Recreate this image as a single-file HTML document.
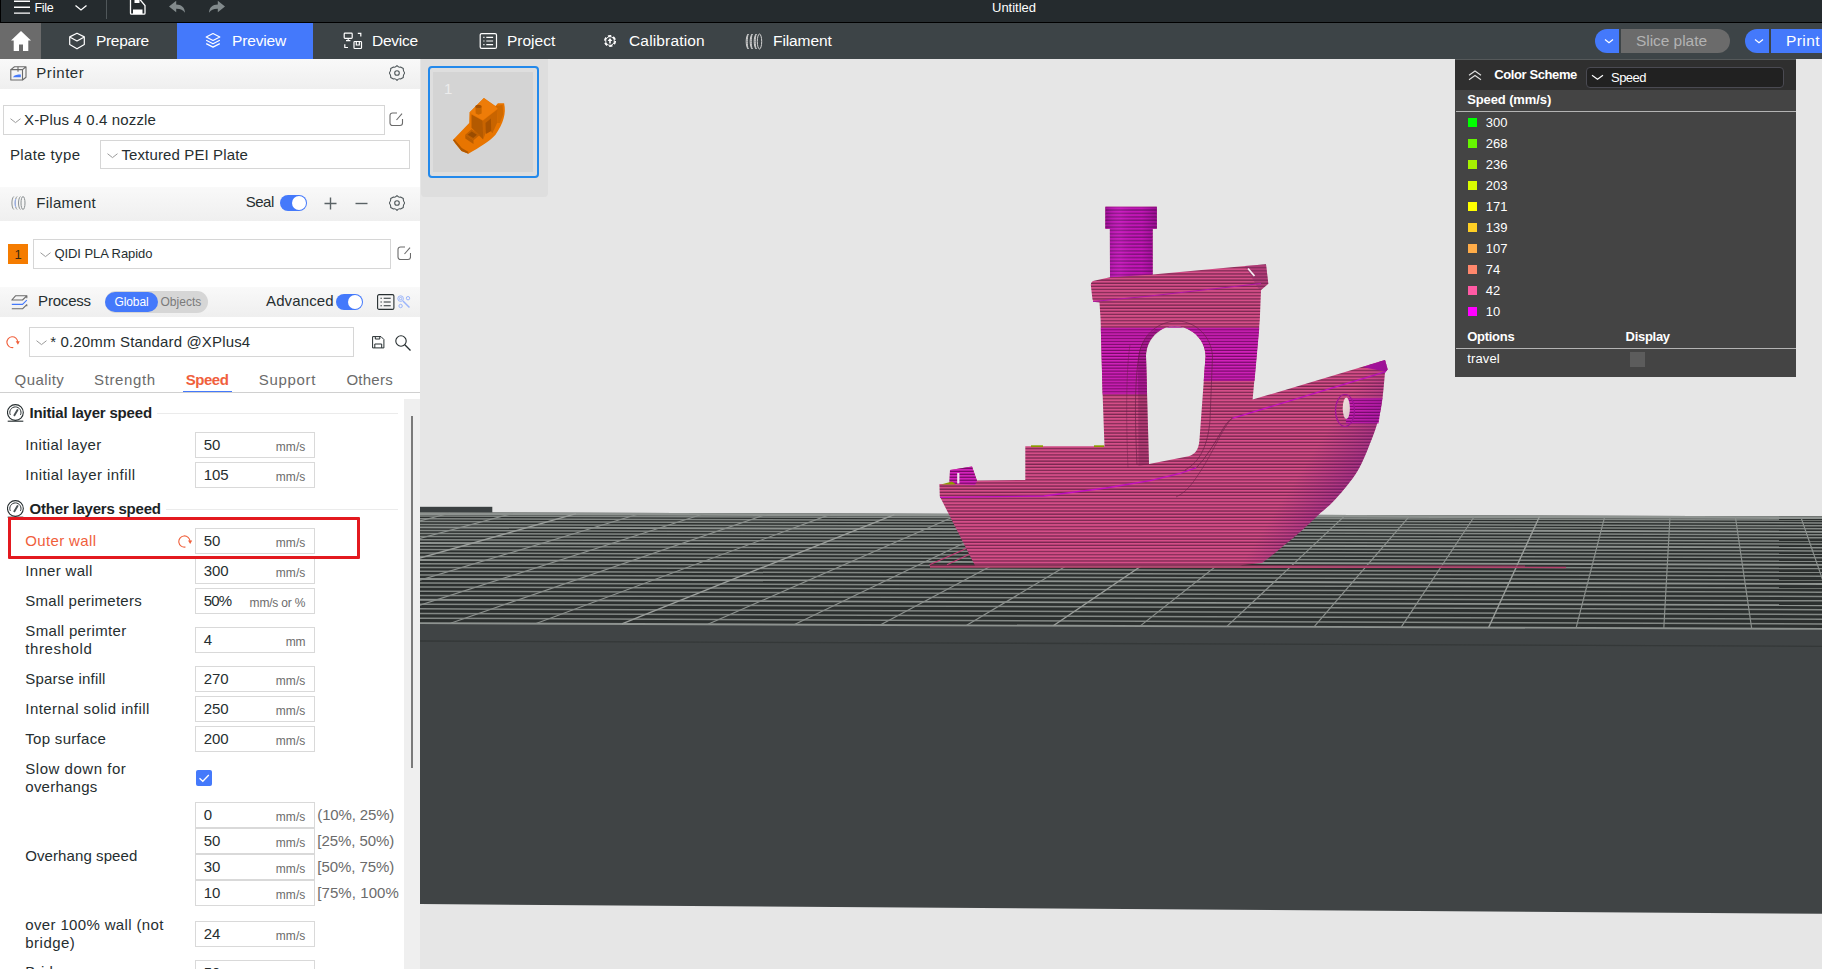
<!DOCTYPE html>
<html lang="en">
<head>
<meta charset="utf-8">
<title>Untitled</title>
<style>
*{box-sizing:border-box;margin:0;padding:0}
html,body{width:1822px;height:969px;overflow:hidden;background:#e6e6e6;font-family:"Liberation Sans",sans-serif;color:#262e30}
.abs{position:absolute}
#titlebar{position:absolute;left:0;top:0;width:1822px;height:23px;background:#252b2e;border-bottom:1px solid #000;color:#fff;overflow:hidden;z-index:5}
#navbar{position:absolute;left:0;top:23px;width:1822px;height:36px;background:#3d4447;color:#fff;z-index:5}
#left{position:absolute;left:0;top:0;width:420px;height:969px;background:#fff;overflow:hidden}
#view{position:absolute;left:0;top:0;width:1822px;height:969px;overflow:hidden}
.t{position:absolute;white-space:nowrap;line-height:1}
/* section headers */
.hdr{position:absolute;left:0;width:420px;background:linear-gradient(#f8f8f8,#efefef)}
.combo{position:absolute;border:1px solid #dbdbdb;background:#fff}
.inp{position:absolute;left:195px;width:121px;height:26px;border:1px solid #dbdbdb;background:#fff}
.inp .v{position:absolute;left:8px;top:4px;font-size:15px;line-height:1;color:#262e30}
.inp .u{position:absolute;right:9px;top:8px;font-size:11.5px;line-height:1;color:#6b6b6b}
.lbl{position:absolute;left:25px;font-size:15px;line-height:18px;color:#262e30}
</style>
</head>
<body>
<div id="titlebar">
<div class="abs" style="left:0;top:0;width:1px;height:22px;background:#000"></div>
<svg class="abs" style="left:14px;top:0" width="17" height="15" viewBox="0 0 17 15"><path d="M0 1.2h16M0 7.2h16M0 13.1h16" stroke="#fff" stroke-width="1.4" fill="none"/></svg>
<div class="t" style="left:34.500px;top:1.500px;font-size:12.500px;letter-spacing:-0.300px;color:#fff">File</div>
<svg class="abs" style="left:74px;top:4px" width="14" height="8" viewBox="0 0 14 8"><path d="M1.5 1.5L7 6l5.500-4.500" stroke="#fff" stroke-width="1.3" fill="none"/></svg>
<div class="abs" style="left:106px;top:0;width:1px;height:19px;background:#50575a"></div>
<svg class="abs" style="left:129px;top:0" width="18" height="16" viewBox="0 0 18 16"><path d="M1.500-2V13.200a1 1 0 0 0 1 1H15a1 1 0 0 0 1-1V5.500L10.500-1" stroke="#fff" stroke-width="1.300" fill="none"/><rect x="4" y="9.500" width="9.500" height="4.500" fill="#fff"/><rect x="5.500" y="-1" width="5" height="4" fill="#fff"/></svg>
<svg class="abs" style="left:169px;top:0" width="17" height="14" viewBox="0 0 17 14"><path d="M0 6.500L7.200 0.800V4.500C12.500 4.500 15.800 7.500 16 12.800C14 9.800 11.500 8.600 7.200 8.700V12.300Z" fill="#828a8c"/></svg>
<svg class="abs" style="left:208px;top:0" width="17" height="14" viewBox="0 0 17 14"><path d="M17 6.500L9.800 0.800V4.500C4.500 4.500 1.200 7.500 1 12.800C3 9.800 5.500 8.600 9.800 8.700V12.300Z" fill="#828a8c"/></svg>
<div class="t" style="left:992px;top:1px;font-size:13px;color:#fff">Untitled</div>
</div>
<div id="navbar">
<div class="abs" style="left:0;top:0;width:41px;height:36px;background:#6b6b6b"></div>
<svg class="abs" style="left:10px;top:7px" width="22" height="22" viewBox="0 0 22 22"><path d="M11 1L1 10.500h2.700V21h5.300v-6.500h4V21h5.300V10.500H21Z" fill="#fff"/></svg>
<svg class="abs" style="left:68px;top:9px" width="18" height="18" viewBox="0 0 18 18"><path d="M9 1.200L16.300 4.900V12.600L9 16.800L1.700 12.600V4.900Z M1.700 4.900L9 9L16.300 4.900" stroke="#fff" stroke-width="1.200" fill="none" stroke-linejoin="round"/></svg>
<div class="t" style="left:96px;top:10.200px;font-size:15.500px;letter-spacing:-0.32px">Prepare</div>
<div class="abs" style="left:177px;top:0;width:136px;height:36px;background:#4479fb"></div>
<svg class="abs" style="left:204px;top:9px" width="18" height="18" viewBox="0 0 18 18"><path d="M9 1.500L15.800 5L9 8.500L2.200 5Z M2.200 8.300L9 11.800L15.800 8.300 M2.200 11.600L9 15.100L15.800 11.600" stroke="#fff" stroke-width="1.200" fill="none" stroke-linejoin="round"/></svg>
<div class="t" style="left:232px;top:10.200px;font-size:15.500px;letter-spacing:-0.15px">Preview</div>
<svg class="abs" style="left:343px;top:9px" width="20" height="18" viewBox="0 0 20 18"><g stroke="#fff" stroke-width="1.200" fill="none"><rect x="1.200" y="1.200" width="8" height="5.200" rx="0.800"/><path d="M5.200 6.400V8.500M3 8.600h4.400"/><path d="M14.800 1.300h3v3.200"/><path d="M1.800 12.300v3.200h3.200"/><rect x="11" y="9.500" width="7.500" height="7" rx="0.800"/><path d="M13.300 9.800v3.200h3v-3.200"/></g></svg>
<div class="t" style="left:372px;top:10.200px;font-size:15.500px;letter-spacing:-0.26px">Device</div>
<svg class="abs" style="left:479px;top:9px" width="19" height="18" viewBox="0 0 19 18"><g stroke="#fff" stroke-width="1.200" fill="none"><rect x="1.200" y="1.600" width="16.300" height="14.800" rx="1.500"/><path d="M4.300 5.400h1.200M7.300 5.400h6.800M4.300 9h1.200M7.300 9h6.800M4.300 12.600h1.200M7.300 12.600h6.800"/></g></svg>
<div class="t" style="left:507px;top:10.200px;font-size:15.500px;letter-spacing:0.00px">Project</div>
<svg class="abs" style="left:603px;top:11px" width="14" height="14" viewBox="0 0 14 14"><circle cx="7" cy="7" r="5.200" stroke="#fff" stroke-width="1.700" stroke-dasharray="3.300 2.150" fill="none"/><circle cx="7" cy="7" r="4.300" stroke="#fff" stroke-width="0.900" fill="none"/><path d="M7 4L4.600 7h1.600v2.600h1.600V7h1.600Z" fill="#fff"/></svg>
<div class="t" style="left:629px;top:10.200px;font-size:15.500px;letter-spacing:0.16px">Calibration</div>
<svg class="abs" style="left:745px;top:10px" width="18" height="17" viewBox="0 0 18 17"><g stroke="#d2d2d2" stroke-width="1" fill="none"><path d="M3.300 1C0.500 3 0.500 14 3.300 16C1.900 13 1.900 4 3.300 1Z"/><path d="M7.300 1C4.500 3 4.500 14 7.300 16C5.900 13 5.900 4 7.300 1Z"/><path d="M11.300 1C8.500 3 8.500 14 11.300 16C9.900 13 9.900 4 11.300 1Z"/><ellipse cx="14.500" cy="8.500" rx="2.200" ry="7.500"/></g></svg>
<div class="t" style="left:773px;top:10.200px;font-size:15.500px;letter-spacing:-0.09px">Filament</div>
<div class="abs" style="left:1595px;top:6px;width:24px;height:24px;background:#4479fb;border-radius:12px 0 0 12px"></div>
<svg class="abs" style="left:1604px;top:15px" width="10" height="7" viewBox="0 0 10 7"><path d="M1 1.500L5 4.800L9 1.500" stroke="#fff" stroke-width="1.200" fill="none"/></svg>
<div class="abs" style="left:1621px;top:6px;width:109px;height:24px;background:#6b6b6b;border-radius:0 12px 12px 0"></div>
<div class="t" style="left:1636px;top:10.200px;font-size:15.500px;letter-spacing:-0.05px;color:#b3b3b3">Slice plate</div>
<div class="abs" style="left:1745px;top:6px;width:24px;height:24px;background:#4479fb;border-radius:12px 0 0 12px"></div>
<svg class="abs" style="left:1754px;top:15px" width="10" height="7" viewBox="0 0 10 7"><path d="M1 1.500L5 4.800L9 1.500" stroke="#fff" stroke-width="1.200" fill="none"/></svg>
<div class="abs" style="left:1771px;top:6px;width:60px;height:24px;background:#4479fb"></div>
<div class="t" style="left:1786px;top:10.200px;font-size:15.500px;letter-spacing:0.40px">Print</div>
</div>
<div id="view">
<svg class="abs" style="left:0;top:0" width="1822" height="969" viewBox="0 0 1822 969">
<defs><clipPath id="cpv"><rect x="420" y="59" width="1402" height="910"/></clipPath><pattern id="pk" width="10" height="3.120" patternUnits="userSpaceOnUse"><rect width="10" height="3.120" fill="#d54e88"/><rect y="1.850" width="10" height="1.270" fill="#7a2850"/></pattern><pattern id="mg" width="10" height="2.950" patternUnits="userSpaceOnUse"><rect width="10" height="2.950" fill="#d522bd"/><rect y="1.650" width="10" height="1.300" fill="#780a68"/></pattern><pattern id="mg2" width="10" height="3.400" patternUnits="userSpaceOnUse"><rect width="10" height="3.400" fill="#c416b8"/><rect y="1.900" width="10" height="1.500" fill="#84107e"/></pattern><linearGradient id="bowsh" gradientUnits="userSpaceOnUse" x1="1298" y1="475" x2="1340" y2="502"><stop offset="0" stop-color="#70107a" stop-opacity="0"/><stop offset="1" stop-color="#70107a" stop-opacity="0.480"/></linearGradient><linearGradient id="chsh" x1="0" x2="1" y1="0" y2="0"><stop offset="0" stop-color="#500050" stop-opacity="0.300"/><stop offset="0.300" stop-color="#ff60ff" stop-opacity="0.120"/><stop offset="0.700" stop-color="#500050" stop-opacity="0"/><stop offset="1" stop-color="#500050" stop-opacity="0.350"/></linearGradient></defs>
<g clip-path="url(#cpv)">
<rect x="420" y="506.800" width="72.300" height="6.500" fill="#3b4041"/>
<polygon points="420,512.16 1822,516.25 1822,628.90 420,623.10" fill="#2c302f"/>
<polygon points="420,623.10 1822,628.90 1822,913.800 420,904.100" fill="#404445"/>
<line x1="420" y1="641" x2="1822" y2="646.300" stroke="#343838" stroke-width="1.300"/>
<line x1="410" y1="513.63" x2="1830" y2="517.77" stroke="#8e9390" stroke-width="2.60"/>
<line x1="410" y1="515.88" x2="1830" y2="520.07" stroke="#838885" stroke-width="1.50"/>
<line x1="410" y1="518.68" x2="1830" y2="522.91" stroke="#838885" stroke-width="1.50"/>
<line x1="410" y1="521.53" x2="1830" y2="525.80" stroke="#838885" stroke-width="1.50"/>
<line x1="410" y1="524.42" x2="1830" y2="528.75" stroke="#838885" stroke-width="1.50"/>
<line x1="410" y1="527.37" x2="1830" y2="531.74" stroke="#8e9390" stroke-width="1.90"/>
<line x1="410" y1="530.38" x2="1830" y2="534.79" stroke="#838885" stroke-width="1.50"/>
<line x1="410" y1="533.43" x2="1830" y2="537.90" stroke="#838885" stroke-width="1.50"/>
<line x1="410" y1="536.55" x2="1830" y2="541.06" stroke="#838885" stroke-width="1.50"/>
<line x1="410" y1="539.72" x2="1830" y2="544.28" stroke="#838885" stroke-width="1.50"/>
<line x1="410" y1="542.95" x2="1830" y2="547.56" stroke="#8e9390" stroke-width="1.90"/>
<line x1="410" y1="546.24" x2="1830" y2="550.91" stroke="#838885" stroke-width="1.50"/>
<line x1="410" y1="549.59" x2="1830" y2="554.31" stroke="#838885" stroke-width="1.50"/>
<line x1="410" y1="553.01" x2="1830" y2="557.78" stroke="#838885" stroke-width="1.50"/>
<line x1="410" y1="556.49" x2="1830" y2="561.32" stroke="#838885" stroke-width="1.50"/>
<line x1="410" y1="560.04" x2="1830" y2="564.93" stroke="#8e9390" stroke-width="1.90"/>
<line x1="410" y1="563.66" x2="1830" y2="568.61" stroke="#838885" stroke-width="1.50"/>
<line x1="410" y1="567.36" x2="1830" y2="572.36" stroke="#838885" stroke-width="1.50"/>
<line x1="410" y1="571.12" x2="1830" y2="576.18" stroke="#838885" stroke-width="1.50"/>
<line x1="410" y1="574.97" x2="1830" y2="580.09" stroke="#838885" stroke-width="1.50"/>
<line x1="410" y1="578.89" x2="1830" y2="584.07" stroke="#8e9390" stroke-width="1.90"/>
<line x1="410" y1="582.90" x2="1830" y2="588.14" stroke="#838885" stroke-width="1.50"/>
<line x1="410" y1="586.98" x2="1830" y2="592.29" stroke="#838885" stroke-width="1.50"/>
<line x1="410" y1="591.16" x2="1830" y2="596.54" stroke="#838885" stroke-width="1.50"/>
<line x1="410" y1="595.42" x2="1830" y2="600.87" stroke="#838885" stroke-width="1.50"/>
<line x1="410" y1="599.78" x2="1830" y2="605.29" stroke="#8e9390" stroke-width="1.90"/>
<line x1="410" y1="604.23" x2="1830" y2="609.81" stroke="#838885" stroke-width="1.50"/>
<line x1="410" y1="608.78" x2="1830" y2="614.44" stroke="#838885" stroke-width="1.50"/>
<line x1="410" y1="613.43" x2="1830" y2="619.16" stroke="#838885" stroke-width="1.50"/>
<line x1="410" y1="618.19" x2="1830" y2="623.99" stroke="#838885" stroke-width="1.50"/>
<line x1="410" y1="623.06" x2="1830" y2="628.94" stroke="#8e9390" stroke-width="1.90"/>
<line x1="323.6" y1="512.88" x2="-144.6" y2="620.76" stroke="#8b908d" stroke-width="1.15"/>
<line x1="386.6" y1="513.06" x2="-60.1" y2="621.11" stroke="#8b908d" stroke-width="1.15"/>
<line x1="449.6" y1="513.25" x2="24.6" y2="621.46" stroke="#8b908d" stroke-width="1.15"/>
<line x1="512.8" y1="513.43" x2="109.5" y2="621.81" stroke="#8b908d" stroke-width="1.15"/>
<line x1="576.1" y1="513.62" x2="194.5" y2="622.17" stroke="#9a9e9b" stroke-width="1.40"/>
<line x1="639.5" y1="513.80" x2="279.7" y2="622.52" stroke="#8b908d" stroke-width="1.15"/>
<line x1="703.0" y1="513.99" x2="365.0" y2="622.87" stroke="#8b908d" stroke-width="1.15"/>
<line x1="766.7" y1="514.17" x2="450.5" y2="623.23" stroke="#8b908d" stroke-width="1.15"/>
<line x1="830.4" y1="514.36" x2="536.1" y2="623.58" stroke="#8b908d" stroke-width="1.15"/>
<line x1="894.3" y1="514.54" x2="621.9" y2="623.94" stroke="#9a9e9b" stroke-width="1.40"/>
<line x1="958.3" y1="514.73" x2="707.9" y2="624.29" stroke="#8b908d" stroke-width="1.15"/>
<line x1="1022.4" y1="514.92" x2="794.0" y2="624.65" stroke="#8b908d" stroke-width="1.15"/>
<line x1="1086.6" y1="515.11" x2="880.2" y2="625.01" stroke="#8b908d" stroke-width="1.15"/>
<line x1="1151.0" y1="515.29" x2="966.7" y2="625.36" stroke="#8b908d" stroke-width="1.15"/>
<line x1="1215.4" y1="515.48" x2="1053.3" y2="625.72" stroke="#9a9e9b" stroke-width="1.40"/>
<line x1="1280.0" y1="515.67" x2="1140.0" y2="626.08" stroke="#8b908d" stroke-width="1.15"/>
<line x1="1344.7" y1="515.86" x2="1226.9" y2="626.44" stroke="#8b908d" stroke-width="1.15"/>
<line x1="1409.5" y1="516.05" x2="1314.0" y2="626.80" stroke="#8b908d" stroke-width="1.15"/>
<line x1="1474.5" y1="516.24" x2="1401.2" y2="627.16" stroke="#8b908d" stroke-width="1.15"/>
<line x1="1539.5" y1="516.43" x2="1488.6" y2="627.52" stroke="#9a9e9b" stroke-width="1.40"/>
<line x1="1604.7" y1="516.62" x2="1576.1" y2="627.89" stroke="#8b908d" stroke-width="1.15"/>
<line x1="1670.0" y1="516.81" x2="1663.8" y2="628.25" stroke="#8b908d" stroke-width="1.15"/>
<line x1="1735.4" y1="517.00" x2="1751.7" y2="628.61" stroke="#8b908d" stroke-width="1.15"/>
<line x1="1800.9" y1="517.19" x2="1839.7" y2="628.98" stroke="#8b908d" stroke-width="1.15"/>
<line x1="1866.6" y1="517.38" x2="1927.8" y2="629.34" stroke="#9a9e9b" stroke-width="1.40"/>
<line x1="1932.3" y1="517.58" x2="2016.2" y2="629.71" stroke="#8b908d" stroke-width="1.15"/>
</g>
<g clip-path="url(#cpv)">
<line x1="930" y1="565.500" x2="1566" y2="565.900" stroke="#6e2c48" stroke-width="1.300"/>
<line x1="930" y1="566.900" x2="1566" y2="567.300" stroke="#b5456f" stroke-width="1.700"/>
<path d="M929.500 564.700L966.500 548.500M947 564.700L970 554" stroke="#c23a74" stroke-width="1.200" fill="none"/>
<path d="M939.400 484.100 L949.400 484 L950 470 L972 466.600 L977 480.600 L1025.300 480 L1025.300 446.200 L1104.500 446.200 L1102.600 394 L1100.600 320 L1099.500 302.500 L1095 302 Q1092.500 301.500 1092.300 298 L1090.800 285 Q1090.800 281.500 1094 280.800 L1110 277.200 L1109.900 228.700 L1105.400 228.700 L1105.400 206.700 L1156.800 206.700 L1156.800 228.700 L1152.600 228.700 L1152.600 274.400 L1245 266 L1266 264.300 L1268.300 283.700 L1261 290 L1259.800 320 L1252.800 397.400 L1252.600 399.600 L1385 360.100 L1387.700 369.400 L1385 372.500 C1384.5 377.4 1383.2 394.0 1382.0 402.0 C1380.8 410.0 1379.8 414.2 1378.0 420.5 C1376.2 426.8 1374.8 431.6 1371.4 440.0 C1368.0 448.4 1363.4 461.2 1357.5 471.0 C1351.6 480.8 1342.5 491.3 1335.8 498.8 C1329.1 506.3 1323.7 509.9 1317.2 515.9 C1310.8 521.9 1303.5 528.8 1297.1 534.5 C1290.6 540.2 1284.3 545.2 1278.5 550.0 C1272.7 554.8 1264.8 560.8 1262.0 563.0 L1240 565.300 L974.800 565.200 L939.800 496.500 Z M1174.600 326.300 C1190 326.300 1205 338 1205.600 356 L1199.400 440.800 C1198.500 450 1195 454.500 1188.500 456.300 L1149 464 L1146 356 C1146.500 338 1160 326.300 1174.600 326.300 Z" fill="url(#pk)" fill-rule="evenodd"/>
<path d="M1105.400 206.700H1156.800V228.700H1152.600V274.400L1110 277.200L1109.900 228.700H1105.400Z" fill="url(#mg2)"/>
<path d="M1105.400 206.700H1156.800V228.700H1152.600V274.400L1110 277.200L1109.900 228.700H1105.400Z" fill="url(#chsh)"/>
<path d="M1100.800 327.700 L1259.300 327.700 L1254.500 381 L1203.700 381 L1204.300 372 L1205.600 356 C1205 338 1190 326.300 1174.600 326.300 C1160 326.300 1146.500 338 1146 356 L1147.050 394.500 L1102.600 394.500 Z" fill="url(#mg)"/>
<path d="M1245 266L1266 264.300L1268.300 283.700L1261 290L1258 288Z" fill="#8a2a66" opacity="0.450"/>
<path d="M1362.600 367L1385 360.100L1387.700 369.400L1385.800 371.700Z" fill="#a3129a"/>
<path d="M1346 398.500L1382.300 398L1378.500 423.500L1346 423.500Z" fill="url(#mg)"/>
<ellipse cx="1345" cy="410.500" rx="9.500" ry="16" fill="none" stroke="#a3149a" stroke-width="1.200"/>
<ellipse cx="1346.300" cy="408.300" rx="3.600" ry="10.800" fill="#ecdcd8"/>
<path d="M949.400 484L950 470L972 466.600L977 481L975 485Z" fill="url(#mg)"/>
<rect x="957.200" y="473" width="2.200" height="10.500" fill="#f0e6ee"/>
<path d="M1248 268.500L1254.500 276" stroke="#f4eef2" stroke-width="1.800"/>
<rect x="1031" y="445.300" width="12" height="1.800" fill="#8a9a00"/><rect x="1094" y="445.300" width="10" height="1.800" fill="#8a9a00"/><path d="M941 484.500L952 481.500L956 484.500Z" fill="#8a9a00"/>
<path d="M940 497.300L1043.900 496L1105.800 488L1150 480.600L1180 473.500L1196.400 467.700M1232.200 418.300L1385.800 371.700" stroke="#c010c0" stroke-width="1.300" fill="none"/>
<path d="M1196.400 467.700C1206 458 1214 444 1220 434C1225 425 1228 421 1232.200 418.300" stroke="#6a2048" stroke-width="0.900" fill="none" opacity="0.800"/>
<path d="M1093 301.500L1150 296L1261 283.500" stroke="#b018a8" stroke-width="1.200" fill="none"/>
<path d="M1137 465C1135 420 1134 380 1140 350C1146 330 1162 321 1178 321C1196 322 1211 336 1212.500 356L1210 420C1208 445 1200 462 1185 470" stroke="#6a2048" stroke-width="0.800" fill="none" opacity="0.800"/>
<path d="M1128 468C1126 420 1126 370 1130 345" stroke="#6a2048" stroke-width="0.700" fill="none" opacity="0.600"/>
<path d="M1138.500 466L1138 360C1139 345 1146 335 1156 329L1160 331C1151 337 1146.500 346 1146 356L1149 464Z" fill="#5a1040" opacity="0.280"/>
<path d="M1232.200 418.300C1222 428 1214 452 1196 478C1188 490 1182 494 1176 497" stroke="#6a2048" stroke-width="0.800" fill="none" opacity="0.700"/>
<path d="M1300 380L1385 360.100L1387.700 369.400L1385 372.500 C1384.5 377.4 1383.2 394.0 1382.0 402.0 C1380.8 410.0 1379.8 414.2 1378.0 420.5 C1376.2 426.8 1374.8 431.6 1371.4 440.0 C1368.0 448.4 1363.4 461.2 1357.5 471.0 C1351.6 480.8 1342.5 491.3 1335.8 498.8 C1329.1 506.3 1323.7 509.9 1317.2 515.9 C1310.8 521.9 1303.5 528.8 1297.1 534.5 C1290.6 540.2 1284.3 545.2 1278.5 550.0 C1272.7 554.8 1264.8 560.8 1262.0 563.0 L1200 564Z" fill="url(#bowsh)"/>
</g></svg>
<div class="abs" style="left:420.5px;top:59px;width:127.3px;height:137.7px;background:#dedede;border-radius:0 0 4px 4px"></div>
<div class="abs" style="left:427.5px;top:66.2px;width:111.2px;height:111.5px;border:2px solid #2389eb;border-radius:4px;background:#dedede"></div>
<div class="abs" style="left:433.3px;top:71.7px;width:99.7px;height:100.3px;background:#d4d4d4"></div>
<div class="t" style="left:444.0px;top:81.0px;font-size:15px;color:#ececec;">1</div>
<svg class="abs" style="left:0;top:0" width="560" height="200" viewBox="0 0 560 200">
<path d="M452.9 139.9 L469.2 123.1 L469.5 112.6 L483.9 98.1 L495.5 106.1 L497.9 103.3 L504.1 103.3 C506.4 113.9 503.3 123.1 495.5 134.8 C489.3 141.7 480.0 147.1 468.4 153.8 L461.5 151.0 L455.6 144.1 Z" fill="#e87500"/>
<polygon points="469.5,112.6 483.9,98.1 497.9,108.4 482.8,120.0" fill="#ee7c08"/>
<polygon points="471.5,114.6 482.8,120.8 483.1,139.4 471.5,127.8" fill="#b45a00"/>
<polygon points="482.8,120.8 497.9,108.9 497.1,123.1 492.4,133.2 487.8,127.8 483.1,139.4" fill="#c86400"/>
<polygon points="485.5,123.1 490.9,118.5 491.2,130.9 485.9,134.0" fill="#a85200"/>
<polygon points="495.5,106.1 502.5,104.9 503.3,113.9 499.9,123.1 497.1,123.1 497.9,108.9" fill="#d06a00"/>
<polygon points="465.3,134.8 471.5,129.3 480.0,134.8 473.5,140.2" fill="#c06000"/>
<polygon points="467.7,134.8 471.7,131.4 476.9,134.8 473.2,137.9" fill="#9a4c00"/>
<polygon points="465.3,134.8 473.5,140.2 473.5,144.1 465.3,138.6" fill="#b85c00"/>
<polygon points="475.4,106.4 481.6,106.4 481.6,113.5 478.5,114.8 475.7,113.5" fill="#c86600"/>
<ellipse cx="478.5" cy="106.4" rx="3.100" ry="1.700" fill="#a85200"/>
<polygon points="452.9,139.9 461.5,151.0 468.4,153.8 468.1,151.8 461.8,147.9 454.5,139.4" fill="#b05800"/>
</svg>
<div class="abs" style="left:1455px;top:59px;width:341px;height:318px;background:#444444"></div>
<div class="abs" style="left:1455px;top:59px;width:341px;height:31px;background:#2f2f2f"></div>
<div class="abs" style="left:1455px;top:59px;width:341px;height:1px;background:#55595a"></div>
<svg class="abs" style="left:1468px;top:69.500px" width="14" height="11" viewBox="0 0 14 11"><path d="M1 5.300L7 1L13 5.300M1 9.800L7 5.500L13 9.800" stroke="#e0e0e0" stroke-width="1.100" fill="none"/></svg>
<div class="t" style="left:1494.3px;top:68.2px;font-size:13px;letter-spacing:-0.40px;color:#fff;font-weight:bold;">Color Scheme</div>
<div class="abs" style="left:1586px;top:67px;width:198px;height:21px;background:#212121;border:1px solid #4a4a52;border-radius:4px"></div>
<svg class="abs" style="left:1590.500px;top:74px" width="13" height="7" viewBox="0 0 13 7"><path d="M1 1.300L6.500 5.300L12 1.300" stroke="#fff" stroke-width="1.100" fill="none"/></svg>
<div class="t" style="left:1611.0px;top:71.0px;font-size:13px;letter-spacing:-0.52px;color:#fff;">Speed</div>
<div class="t" style="left:1467.2px;top:92.8px;font-size:13px;letter-spacing:-0.11px;color:#fff;font-weight:bold;">Speed (mm/s)</div>
<div class="abs" style="left:1456px;top:111px;width:340px;height:1px;background:#b4b4b4"></div>
<div class="abs" style="left:1468px;top:118px;width:9px;height:9px;background:#00ff00"></div>
<div class="t" style="left:1485.7px;top:116.0px;font-size:13px;color:#fff;">300</div>
<div class="abs" style="left:1468px;top:139px;width:9px;height:9px;background:#66f500"></div>
<div class="t" style="left:1485.7px;top:137.0px;font-size:13px;color:#fff;">268</div>
<div class="abs" style="left:1468px;top:160px;width:9px;height:9px;background:#a6f200"></div>
<div class="t" style="left:1485.7px;top:158.0px;font-size:13px;color:#fff;">236</div>
<div class="abs" style="left:1468px;top:181px;width:9px;height:9px;background:#d9fb00"></div>
<div class="t" style="left:1485.7px;top:179.0px;font-size:13px;color:#fff;">203</div>
<div class="abs" style="left:1468px;top:202px;width:9px;height:9px;background:#ffff00"></div>
<div class="t" style="left:1485.7px;top:200.0px;font-size:13px;color:#fff;">171</div>
<div class="abs" style="left:1468px;top:223px;width:9px;height:9px;background:#ffcf24"></div>
<div class="t" style="left:1485.7px;top:221.0px;font-size:13px;color:#fff;">139</div>
<div class="abs" style="left:1468px;top:244px;width:9px;height:9px;background:#ffac48"></div>
<div class="t" style="left:1485.7px;top:242.0px;font-size:13px;color:#fff;">107</div>
<div class="abs" style="left:1468px;top:265px;width:9px;height:9px;background:#ff876c"></div>
<div class="t" style="left:1485.7px;top:263.0px;font-size:13px;color:#fff;">74</div>
<div class="abs" style="left:1468px;top:286px;width:9px;height:9px;background:#ff5aa4"></div>
<div class="t" style="left:1485.7px;top:284.0px;font-size:13px;color:#fff;">42</div>
<div class="abs" style="left:1468px;top:307px;width:9px;height:9px;background:#ff00ff"></div>
<div class="t" style="left:1485.7px;top:305.0px;font-size:13px;color:#fff;">10</div>
<div class="t" style="left:1467.2px;top:330.0px;font-size:13px;letter-spacing:-0.27px;color:#fff;font-weight:bold;">Options</div>
<div class="t" style="left:1625.6px;top:330.0px;font-size:13px;letter-spacing:-0.29px;color:#fff;font-weight:bold;">Display</div>
<div class="abs" style="left:1456px;top:347.5px;width:340px;height:1px;background:#b4b4b4"></div>
<div class="t" style="left:1467.2px;top:352.1px;font-size:13px;letter-spacing:0.14px;color:#fff;">travel</div>
<div class="abs" style="left:1629.6px;top:352px;width:15.4px;height:14.5px;background:#5c5c5c"></div>
</div><!--/view-->
<div id="left">
<div class="abs" style="left:0px;top:59px;width:420px;height:30px;background:linear-gradient(#f9f9f9,#efefef)"></div>
<svg class="abs" style="left:9.5px;top:65.5px" width="17" height="15" viewBox="0 0 17 15"><g stroke="#6b6b6b" stroke-width="1.100" fill="none" stroke-linejoin="round"><path d="M0.800 3.600H12.500V14H0.800Z"/><path d="M0.800 3.600L4.500 0.800H16L12.500 3.600M16 0.800V11.200L12.500 14"/><path d="M8 0.800V5.800"/></g><path d="M2.800 11.200C4.500 9.200 6 8.300 10.800 8.400V11.200Z" fill="#4479fb"/></svg>
<div class="t" style="left:36.3px;top:65.1px;font-size:15px;letter-spacing:0.54px;color:#262e30;">Printer</div>
<svg class="abs" style="left:389px;top:65px" width="16" height="16" viewBox="0 0 16 16"><path d="M8 0.700C9.300 2.200 10.200 2.700 11.500 2L14.300 3.600C14.100 5.300 14.300 6.300 15.700 8C14.300 9.700 14.100 10.700 14.300 12.400L11.500 14C10.200 13.300 9.300 13.800 8 15.300C6.700 13.800 5.800 13.300 4.500 14L1.700 12.400C1.900 10.700 1.700 9.700 0.300 8C1.700 6.300 1.900 5.300 1.700 3.600L4.500 2C5.800 2.700 6.700 2.200 8 0.700Z" stroke="#50585b" stroke-width="1.100" fill="none" stroke-linejoin="round"/><circle cx="8" cy="8" r="2.300" stroke="#50585b" stroke-width="1.100" fill="none"/></svg>
<div class="abs" style="left:3px;top:105px;width:382px;height:30px;border:1px solid #d6d6d6;background:#fff"></div>
<svg class="abs" style="left:10px;top:118px" width="11" height="6" viewBox="0 0 11 6"><path d="M0.500 0.700L5.500 4.600L10.500 0.700" stroke="#9a9a9a" stroke-width="1" fill="none"/></svg>
<div class="t" style="left:24.0px;top:111.9px;font-size:15px;letter-spacing:0.15px;color:#262e30;">X-Plus 4 0.4 nozzle</div>
<svg class="abs" style="left:389px;top:112px" width="14.5" height="14.5" viewBox="0 0 14.5 14.5"><path d="M8 1H3.500A2.500 2.500 0 0 0 1 3.500V11A2.500 2.500 0 0 0 3.500 13.500H11A2.500 2.500 0 0 0 13.500 11V7" stroke="#6b6b6b" stroke-width="1.100" fill="none"/><path d="M13 1.700L7.500 8" stroke="#6b6b6b" stroke-width="1.100"/></svg>
<div class="t" style="left:10.0px;top:146.6px;font-size:15px;letter-spacing:0.37px;color:#262e30;">Plate type</div>
<div class="abs" style="left:100px;top:140px;width:310px;height:29px;border:1px solid #d6d6d6;background:#fff"></div>
<svg class="abs" style="left:107px;top:152.5px" width="11" height="6" viewBox="0 0 11 6"><path d="M0.500 0.700L5.500 4.600L10.500 0.700" stroke="#9a9a9a" stroke-width="1" fill="none"/></svg>
<div class="t" style="left:121.4px;top:147.0px;font-size:15px;letter-spacing:0.13px;color:#262e30;">Textured PEI Plate</div>
<div class="abs" style="left:0px;top:187px;width:420px;height:34px;background:linear-gradient(#f9f9f9,#efefef)"></div>
<svg class="abs" style="left:11px;top:196px" width="15" height="14" viewBox="0 0 15 14"><g stroke="#8a9092" stroke-width="1" fill="none"><path d="M2.800 0.500C0.300 2.500 0.300 11.500 2.800 13.500"/><path d="M6.100 0.500C3.600 2.500 3.600 11.500 6.100 13.500"/><path d="M9.400 0.500C6.900 2.500 6.900 11.500 9.400 13.500"/><ellipse cx="12" cy="7" rx="2" ry="6.500"/></g><path d="M4.700 3C3.800 5 3.800 9 4.700 11" stroke="#9bb5fb" stroke-width="1" fill="none"/></svg>
<div class="t" style="left:36.3px;top:195.0px;font-size:15px;letter-spacing:0.27px;color:#262e30;">Filament</div>
<div class="t" style="left:245.8px;top:194.3px;font-size:15px;letter-spacing:-0.51px;color:#262e30;">Seal</div>
<div class="abs" style="left:280px;top:195px;width:27px;height:16px;background:#4479fb;border-radius:8px"></div>
<div class="abs" style="left:292px;top:196px;width:14px;height:14px;background:#fff;border-radius:7px"></div>
<svg class="abs" style="left:323.5px;top:196.5px" width="13" height="13" viewBox="0 0 13 13"><path d="M6.500 0.500V12.500M0.500 6.500H12.500" stroke="#5a6265" stroke-width="1.400"/></svg>
<svg class="abs" style="left:354.5px;top:196.5px" width="13" height="13" viewBox="0 0 13 13"><path d="M0.500 6.500H12.500" stroke="#5a6265" stroke-width="1.400"/></svg>
<svg class="abs" style="left:389px;top:195px" width="16" height="16" viewBox="0 0 16 16"><path d="M8 0.700C9.300 2.200 10.200 2.700 11.500 2L14.300 3.600C14.100 5.300 14.300 6.300 15.700 8C14.300 9.700 14.100 10.700 14.300 12.400L11.500 14C10.200 13.300 9.300 13.800 8 15.300C6.700 13.800 5.800 13.300 4.500 14L1.700 12.400C1.900 10.700 1.700 9.700 0.300 8C1.700 6.300 1.900 5.300 1.700 3.600L4.500 2C5.800 2.700 6.700 2.200 8 0.700Z" stroke="#50585b" stroke-width="1.100" fill="none" stroke-linejoin="round"/><circle cx="8" cy="8" r="2.300" stroke="#50585b" stroke-width="1.100" fill="none"/></svg>
<div class="abs" style="left:8px;top:244px;width:20px;height:20px;background:#f57c00"></div>
<div class="t" style="left:14.6px;top:247.7px;font-size:13px;color:#3a2a10;">1</div>
<div class="abs" style="left:33px;top:239px;width:358px;height:30px;border:1px solid #d6d6d6;background:#fff"></div>
<svg class="abs" style="left:40px;top:251.5px" width="11" height="6" viewBox="0 0 11 6"><path d="M0.500 0.700L5.500 4.600L10.500 0.700" stroke="#9a9a9a" stroke-width="1" fill="none"/></svg>
<div class="t" style="left:54.4px;top:247.3px;font-size:13px;letter-spacing:-0.07px;color:#262e30;">QIDI PLA Rapido</div>
<svg class="abs" style="left:396.5px;top:246px" width="14.5" height="14.5" viewBox="0 0 14.5 14.5"><path d="M8 1H3.500A2.500 2.500 0 0 0 1 3.500V11A2.500 2.500 0 0 0 3.500 13.500H11A2.500 2.500 0 0 0 13.500 11V7" stroke="#6b6b6b" stroke-width="1.100" fill="none"/><path d="M13 1.700L7.500 8" stroke="#6b6b6b" stroke-width="1.100"/></svg>
<div class="abs" style="left:0px;top:287px;width:420px;height:30px;background:linear-gradient(#f9f9f9,#efefef)"></div>
<svg class="abs" style="left:11px;top:294.5px" width="17" height="15" viewBox="0 0 17 15"><g stroke="#6b6b6b" stroke-width="1.100" fill="none" stroke-linejoin="round"><path d="M4.500 0.800H15.800L11.500 5H0.800Z"/><path d="M0.800 13.800H11.500L15.800 9.600"/><path d="M15.800 0.800V3.200M15.800 9.600V11.200"/></g><path d="M0.800 9.400H11.500L15.800 5.200" stroke="#4479fb" stroke-width="1.100" fill="none"/></svg>
<div class="t" style="left:38.1px;top:293.1px;font-size:15px;letter-spacing:-0.20px;color:#262e30;">Process</div>
<div class="abs" style="left:105px;top:291px;width:103px;height:21.5px;background:#d6d6d6;border-radius:11px"></div>
<div class="abs" style="left:105px;top:292px;width:52.5px;height:20px;background:#4479fb;border-radius:10px"></div>
<div class="t" style="left:114.6px;top:295.8px;font-size:12px;letter-spacing:-0.14px;color:#fff;">Global</div>
<div class="t" style="left:160.4px;top:295.8px;font-size:12px;letter-spacing:0.05px;color:#7a7a7a;">Objects</div>
<div class="t" style="left:266.0px;top:293.1px;font-size:15px;letter-spacing:0.13px;color:#262e30;">Advanced</div>
<div class="abs" style="left:336px;top:294px;width:27px;height:16px;background:#4479fb;border-radius:8px"></div>
<div class="abs" style="left:348px;top:295px;width:14px;height:14px;background:#fff;border-radius:7px"></div>
<svg class="abs" style="left:377px;top:294px" width="18" height="16" viewBox="0 0 18 16"><g stroke="#262e30" stroke-width="1.100" fill="none"><rect x="0.600" y="0.600" width="16.300" height="14.800" rx="1.500"/><path d="M3.500 4.300h1.300M6.700 4.300h7M3.500 8h1.300M6.700 8h7M3.500 11.700h1.300M6.700 11.700h7"/></g></svg>
<svg class="abs" style="left:397px;top:295px" width="14" height="14" viewBox="0 0 14 14"><g stroke="#9bb5fb" stroke-width="1" fill="none"><circle cx="3.600" cy="3.600" r="2.800"/><circle cx="3.600" cy="3.600" r="1.200"/><circle cx="11" cy="3.200" r="1.700"/><circle cx="3.600" cy="11" r="1.700"/><path d="M6 6L12.500 12.500" stroke-width="1.500"/></g></svg>
<svg class="abs" style="left:6px;top:336px" width="14.5" height="12.5" viewBox="0 0 14.5 12.5"><path d="M7.300 11.500A5.400 5.400 0 1 1 11.700 6" stroke="#f0603c" stroke-width="1.100" fill="none"/><path d="M9.700 5.200L13.800 5.200L11.900 8.700Z" fill="#f0603c"/></svg>
<div class="abs" style="left:29px;top:327px;width:325px;height:30px;border:1px solid #d6d6d6;background:#fff"></div>
<svg class="abs" style="left:36px;top:339.5px" width="11" height="6" viewBox="0 0 11 6"><path d="M0.500 0.700L5.500 4.600L10.500 0.700" stroke="#9a9a9a" stroke-width="1" fill="none"/></svg>
<div class="t" style="left:50.2px;top:334.0px;font-size:15px;letter-spacing:0.16px;color:#262e30;">* 0.20mm Standard @XPlus4</div>
<svg class="abs" style="left:372px;top:336px" width="12.5" height="12.5" viewBox="0 0 12.5 12.5"><g stroke="#262e30" stroke-width="1" fill="none"><path d="M0.600 0.600H9L11.900 3.500V11.900H0.600Z"/><path d="M2.800 11.900V8H9.700V11.900"/><path d="M3.300 0.600V3h4.500V0.600"/></g></svg>
<svg class="abs" style="left:394.5px;top:334.5px" width="17" height="17" viewBox="0 0 17 17"><circle cx="6" cy="6" r="5.200" stroke="#262e30" stroke-width="1.100" fill="none"/><path d="M9.800 9.800L15.500 15.500" stroke="#262e30" stroke-width="1.300"/></svg>
<div class="t" style="left:14.6px;top:372.0px;font-size:15px;letter-spacing:0.42px;color:#6b6b6b;">Quality</div>
<div class="t" style="left:94.1px;top:372.0px;font-size:15px;letter-spacing:0.61px;color:#6b6b6b;">Strength</div>
<div class="t" style="left:185.8px;top:372.0px;font-size:15px;letter-spacing:-0.50px;color:#f0603c;font-weight:bold;">Speed</div>
<div class="t" style="left:258.7px;top:372.0px;font-size:15px;letter-spacing:0.71px;color:#6b6b6b;">Support</div>
<div class="t" style="left:346.4px;top:372.0px;font-size:15px;letter-spacing:0.26px;color:#6b6b6b;">Others</div>
<div class="abs" style="left:0px;top:392px;width:420px;height:1px;background:#d0d0d0"></div>
<div class="abs" style="left:183px;top:390.5px;width:49px;height:1.5px;background:#4479fb"></div>
<div class="abs" style="left:404px;top:399px;width:16px;height:570px;background:#efefef"></div>
<div class="abs" style="left:411px;top:416px;width:2px;height:352px;background:#7a7a7a"></div>
<svg class="abs" style="left:6.5px;top:404.3px" width="17" height="18" viewBox="0 0 17 18"><circle cx="8.400" cy="8.500" r="7.900" stroke="#262e30" stroke-width="1.100" fill="none"/><path d="M3.330 10.870A5.600 5.600 0 1 1 13.470 10.870" stroke="#262e30" stroke-width="1" fill="none"/><path d="M7.400 11.300L10.500 6" stroke="#4a5255" stroke-width="1.900" stroke-linecap="round"/><path d="M0.700 17.200H16.300" stroke="#262e30" stroke-width="1.100"/></svg>
<div class="t" style="left:29.6px;top:405.1px;font-size:15px;letter-spacing:-0.19px;color:#1c2325;font-weight:bold;">Initial layer speed</div>
<div class="abs" style="left:157px;top:413.3px;width:241px;height:1px;background:#ebebeb"></div>
<div class="t" style="left:25.3px;top:437.0px;font-size:15px;letter-spacing:0.36px;color:#262e30;">Initial layer</div>
<div class="abs" style="left:195px;top:432px;width:120px;height:26px;border:1px solid #d9d9d9;background:#fff"></div>
<div class="t" style="left:203.7px;top:437.3px;font-size:15px;letter-spacing:0.01px;color:#262e30;">50</div>
<div class="t" style="left:275.7px;top:440.8px;font-size:12px;letter-spacing:0.12px;color:#6b6b6b;">mm/s</div>
<div class="t" style="left:25.3px;top:467.0px;font-size:15px;letter-spacing:0.42px;color:#262e30;">Initial layer infill</div>
<div class="abs" style="left:195px;top:462px;width:120px;height:26px;border:1px solid #d9d9d9;background:#fff"></div>
<div class="t" style="left:203.7px;top:467.3px;font-size:15px;letter-spacing:-0.01px;color:#262e30;">105</div>
<div class="t" style="left:275.7px;top:470.8px;font-size:12px;letter-spacing:0.12px;color:#6b6b6b;">mm/s</div>
<svg class="abs" style="left:6.5px;top:500.3px" width="17" height="18" viewBox="0 0 17 18"><circle cx="8.400" cy="8.500" r="7.900" stroke="#262e30" stroke-width="1.100" fill="none"/><path d="M3.330 10.870A5.600 5.600 0 1 1 13.470 10.870" stroke="#262e30" stroke-width="1" fill="none"/><path d="M7.400 11.300L10.500 6" stroke="#4a5255" stroke-width="1.900" stroke-linecap="round"/><path d="M0.700 17.200H16.300" stroke="#262e30" stroke-width="1.100"/></svg>
<div class="t" style="left:29.6px;top:501.1px;font-size:15px;letter-spacing:-0.22px;color:#1c2325;font-weight:bold;">Other layers speed</div>
<div class="abs" style="left:166px;top:509.3px;width:232px;height:1px;background:#ebebeb"></div>
<div class="t" style="left:25.3px;top:533.4px;font-size:15px;letter-spacing:0.35px;color:#f0603c;">Outer wall</div>
<svg class="abs" style="left:178px;top:534.5px" width="14.5" height="13" viewBox="0 0 14.5 13"><path d="M7.500 12A5.600 5.600 0 1 1 12 6.300" stroke="#f0603c" stroke-width="1.100" fill="none"/><path d="M10 5.500L14.200 5.500L12.200 9Z" fill="#f0603c"/></svg>
<div class="abs" style="left:195px;top:528px;width:120px;height:26px;border:1px solid #d9d9d9;background:#fff"></div>
<div class="t" style="left:203.7px;top:533.3px;font-size:15px;letter-spacing:0.01px;color:#262e30;">50</div>
<div class="t" style="left:275.7px;top:536.8px;font-size:12px;letter-spacing:0.12px;color:#6b6b6b;">mm/s</div>
<div class="t" style="left:25.3px;top:563.3px;font-size:15px;letter-spacing:0.31px;color:#262e30;">Inner wall</div>
<div class="abs" style="left:195px;top:558px;width:120px;height:26px;border:1px solid #d9d9d9;background:#fff"></div>
<div class="t" style="left:203.7px;top:563.3px;font-size:15px;letter-spacing:-0.01px;color:#262e30;">300</div>
<div class="t" style="left:275.7px;top:566.8px;font-size:12px;letter-spacing:0.12px;color:#6b6b6b;">mm/s</div>
<div class="t" style="left:25.3px;top:593.1px;font-size:15px;letter-spacing:0.26px;color:#262e30;">Small perimeters</div>
<div class="abs" style="left:195px;top:588px;width:120px;height:26px;border:1px solid #d9d9d9;background:#fff"></div>
<div class="t" style="left:203.7px;top:593.3px;font-size:15px;letter-spacing:-0.76px;color:#262e30;">50%</div>
<div class="t" style="left:249.6px;top:596.8px;font-size:12px;letter-spacing:-0.19px;color:#6b6b6b;">mm/s or %</div>
<div class="t" style="left:25.3px;top:621.8px;font-size:15px;line-height:17.9px;color:#262e30"><span style="letter-spacing:0.33px">Small perimter</span><br><span style="letter-spacing:0.60px">threshold</span></div>
<div class="abs" style="left:195px;top:627px;width:120px;height:26px;border:1px solid #d9d9d9;background:#fff"></div>
<div class="t" style="left:203.7px;top:632.3px;font-size:15px;color:#262e30;">4</div>
<div class="t" style="left:285.7px;top:635.8px;font-size:12px;letter-spacing:-0.29px;color:#6b6b6b;">mm</div>
<div class="t" style="left:25.3px;top:671.3px;font-size:15px;letter-spacing:0.21px;color:#262e30;">Sparse infill</div>
<div class="abs" style="left:195px;top:666px;width:120px;height:26px;border:1px solid #d9d9d9;background:#fff"></div>
<div class="t" style="left:203.7px;top:671.3px;font-size:15px;letter-spacing:-0.01px;color:#262e30;">270</div>
<div class="t" style="left:275.7px;top:674.8px;font-size:12px;letter-spacing:0.12px;color:#6b6b6b;">mm/s</div>
<div class="t" style="left:25.3px;top:701.1px;font-size:15px;letter-spacing:0.45px;color:#262e30;">Internal solid infill</div>
<div class="abs" style="left:195px;top:696px;width:120px;height:26px;border:1px solid #d9d9d9;background:#fff"></div>
<div class="t" style="left:203.7px;top:701.3px;font-size:15px;letter-spacing:-0.01px;color:#262e30;">250</div>
<div class="t" style="left:275.7px;top:704.8px;font-size:12px;letter-spacing:0.12px;color:#6b6b6b;">mm/s</div>
<div class="t" style="left:25.3px;top:731.0px;font-size:15px;letter-spacing:0.30px;color:#262e30;">Top surface</div>
<div class="abs" style="left:195px;top:726px;width:120px;height:26px;border:1px solid #d9d9d9;background:#fff"></div>
<div class="t" style="left:203.7px;top:731.3px;font-size:15px;letter-spacing:-0.01px;color:#262e30;">200</div>
<div class="t" style="left:275.7px;top:734.8px;font-size:12px;letter-spacing:0.12px;color:#6b6b6b;">mm/s</div>
<div class="t" style="left:25.3px;top:759.9px;font-size:15px;line-height:17.8px;color:#262e30"><span style="letter-spacing:0.52px">Slow down for</span><br><span style="letter-spacing:0.24px">overhangs</span></div>
<div class="abs" style="left:196px;top:770px;width:16px;height:16px;background:#4479fb;border-radius:2px"></div>
<svg class="abs" style="left:196px;top:770px" width="16" height="16" viewBox="0 0 16 16"><path d="M3.500 8.300L6.800 11.300L12.800 5" stroke="#fff" stroke-width="1.300" fill="none"/></svg>
<div class="t" style="left:25.3px;top:847.8px;font-size:15px;letter-spacing:0.08px;color:#262e30;">Overhang speed</div>
<div class="abs" style="left:195px;top:802px;width:120px;height:25.6px;border:1px solid #d9d9d9;background:#fff"></div>
<div class="t" style="left:203.7px;top:807.3px;font-size:15px;color:#262e30;">0</div>
<div class="t" style="left:275.7px;top:810.8px;font-size:12px;letter-spacing:0.12px;color:#6b6b6b;">mm/s</div>
<div class="t" style="left:317.3px;top:806.9px;font-size:15px;letter-spacing:-0.15px;color:#6b6b6b;">(10%, 25%)</div>
<div class="abs" style="left:195px;top:828px;width:120px;height:25.6px;border:1px solid #d9d9d9;background:#fff"></div>
<div class="t" style="left:203.7px;top:833.3px;font-size:15px;letter-spacing:0.01px;color:#262e30;">50</div>
<div class="t" style="left:275.7px;top:836.8px;font-size:12px;letter-spacing:0.12px;color:#6b6b6b;">mm/s</div>
<div class="t" style="left:317.3px;top:832.9px;font-size:15px;letter-spacing:-0.06px;color:#6b6b6b;">[25%, 50%)</div>
<div class="abs" style="left:195px;top:854px;width:120px;height:25.6px;border:1px solid #d9d9d9;background:#fff"></div>
<div class="t" style="left:203.7px;top:859.3px;font-size:15px;letter-spacing:0.01px;color:#262e30;">30</div>
<div class="t" style="left:275.7px;top:862.8px;font-size:12px;letter-spacing:0.12px;color:#6b6b6b;">mm/s</div>
<div class="t" style="left:317.3px;top:858.9px;font-size:15px;letter-spacing:-0.06px;color:#6b6b6b;">[50%, 75%)</div>
<div class="abs" style="left:195px;top:880px;width:120px;height:25.6px;border:1px solid #d9d9d9;background:#fff"></div>
<div class="t" style="left:203.7px;top:885.3px;font-size:15px;letter-spacing:0.01px;color:#262e30;">10</div>
<div class="t" style="left:275.7px;top:888.8px;font-size:12px;letter-spacing:0.12px;color:#6b6b6b;">mm/s</div>
<div class="t" style="left:317.3px;top:884.9px;font-size:15px;letter-spacing:0.07px;color:#6b6b6b;">[75%, 100%</div>
<div class="t" style="left:25.3px;top:915.9px;font-size:15px;line-height:17.8px;color:#262e30"><span style="letter-spacing:0.35px">over 100% wall (not</span><br><span style="letter-spacing:0.47px">bridge)</span></div>
<div class="abs" style="left:195px;top:921px;width:120px;height:26px;border:1px solid #d9d9d9;background:#fff"></div>
<div class="t" style="left:203.7px;top:926.3px;font-size:15px;letter-spacing:0.01px;color:#262e30;">24</div>
<div class="t" style="left:275.7px;top:929.8px;font-size:12px;letter-spacing:0.12px;color:#6b6b6b;">mm/s</div>
<div class="t" style="left:25.3px;top:964.3px;font-size:15px;letter-spacing:0.33px;color:#262e30;">Bridge</div>
<div class="abs" style="left:195px;top:960px;width:120px;height:26px;border:1px solid #d9d9d9;background:#fff"></div>
<div class="t" style="left:203.7px;top:965.3px;font-size:15px;letter-spacing:0.01px;color:#262e30;">50</div>
<div class="t" style="left:275.7px;top:968.8px;font-size:12px;letter-spacing:0.12px;color:#6b6b6b;">mm/s</div>
<div class="abs" style="left:7.5px;top:516.5px;width:352px;height:42px;border:3px solid #e3191f;border-radius:1px"></div>
</div><!--/left-->

</body>
</html>
